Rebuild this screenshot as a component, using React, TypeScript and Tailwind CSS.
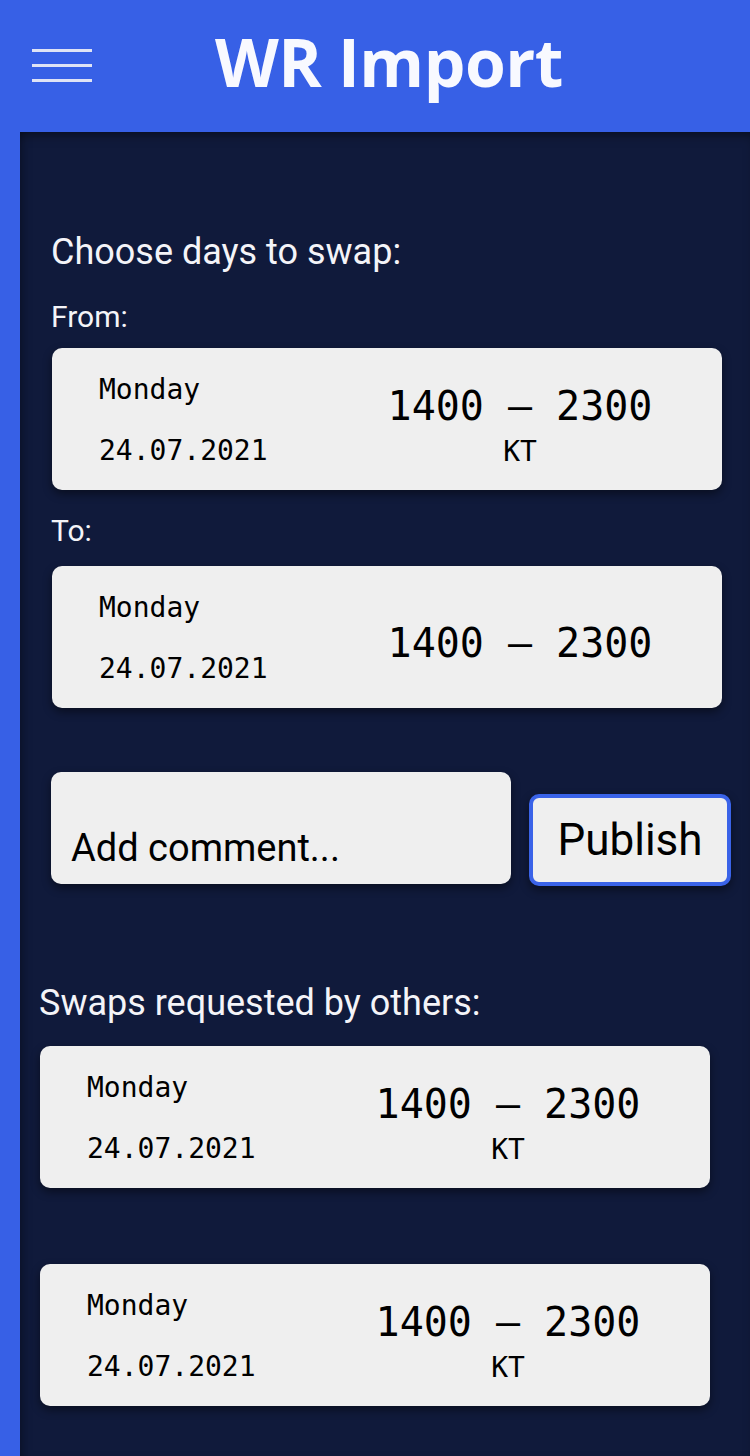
import React from "react";

const mono = { fontFamily: '"DejaVu Sans Mono", "Liberation Mono", monospace' };

function ShiftCard({ location }: { location?: string }) {
  return (
    <div
      className="flex h-[142px] w-[670px] rounded-[10px] bg-[#efefef] text-black shadow-[0_4px_10px_rgba(0,0,0,0.45)]"
      style={mono}
    >
      <div className="w-[300px] pl-[47px] pt-[28px]">
        <div className="text-[28px] leading-[28px]">Monday</div>
        <div className="mt-[33px] text-[28px] leading-[28px]">24.07.2021</div>
      </div>
      <div className={"w-[336px] text-center " + (location ? "pt-[38px]" : "pt-[57px]")}>
        <div className="text-[40px] leading-[40px] whitespace-pre">1400 – 2300</div>
        {location && <div className="mt-[12px] text-[28px] leading-[28px]">{location}</div>}
      </div>
    </div>
  );
}

export default function App() {
  return (
    <div className="min-h-[1456px] w-[750px] bg-[#3760e6]" style={{ fontFamily: "Roboto, sans-serif" }}>
      <header className="relative flex h-[132px] items-center">
        <div className="absolute left-[32px] top-[49px] flex w-[60px] flex-col gap-[12px]">
          <span className="h-[3px] bg-[#dfe3f5]" />
          <span className="h-[3px] bg-[#dfe3f5]" />
          <span className="h-[3px] bg-[#dfe3f5]" />
        </div>
        <h1
          className="ml-[215px] -mt-[10px] text-[66px] font-bold leading-none tracking-[-0.5px] text-[#f8f9ff]"
          style={{ fontFamily: '"Open Sans", sans-serif' }}
        >
          WR Import
        </h1>
      </header>

      <main className="ml-[20px] min-h-[1324px] bg-[#101a3b] pb-[40px] text-[#f4f4f8] shadow-[inset_0_8px_12px_-6px_rgba(0,0,0,0.5),inset_8px_0_12px_-8px_rgba(0,0,0,0.4)]">
        <section className="pl-[31px] pt-[100px]">
          <h2 className="text-[36px] leading-[40px]">Choose days to swap:</h2>
          <div className="mt-[30px] text-[30px] leading-[30px]">From:</div>
          <div className="ml-[1px] mt-[16px]">
            <ShiftCard location="KT" />
          </div>
          <div className="mt-[26px] text-[30px] leading-[30px]">To:</div>
          <div className="ml-[1px] mt-[20px]">
            <ShiftCard />
          </div>

          <div className="mt-[64px] flex items-end">
            <div className="flex h-[112px] w-[460px] items-end rounded-[10px] bg-[#efefef] pb-[14px] pl-[20px] text-[38px] leading-[44px] text-black shadow-[0_4px_10px_rgba(0,0,0,0.45)]">
              Add comment...
            </div>
            <button className="mb-[-2px] ml-[18px] flex h-[92px] w-[202px] items-center justify-center rounded-[10px] border-[4px] border-[#3a63e8] bg-[#efefef] text-[44px] text-black shadow-[0_4px_10px_rgba(0,0,0,0.45)]">
              Publish
            </button>
          </div>
        </section>

        <section className="pl-[19px] pt-[99px]">
          <h2 className="text-[36px] leading-[40px]">Swaps requested by others:</h2>
          <div className="ml-[1px] mt-[23px] flex flex-col gap-[76px]">
            <ShiftCard location="KT" />
            <ShiftCard location="KT" />
          </div>
        </section>
      </main>
    </div>
  );
}
